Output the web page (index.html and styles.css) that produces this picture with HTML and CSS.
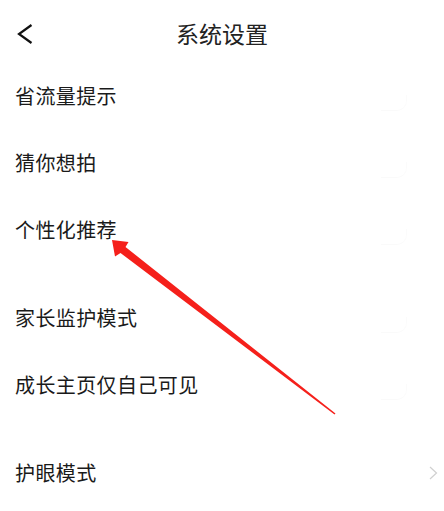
FILE: index.html
```html
<!DOCTYPE html>
<html lang="zh">
<head>
<meta charset="utf-8">
<link rel="stylesheet" href="styles.css">
</head>
<body>
<div class="page">
  <header class="topbar">
    <svg class="back" width="16" height="20" viewBox="0 0 16 20"><polyline points="14.5,1 2,10 14.5,19" fill="none" stroke="#111" stroke-width="2.2" stroke-linejoin="miter"/></svg>
    <h1 class="title">系统设置</h1>
  </header>
  <ul class="list">
    <li class="row"><span class="label">省流量提示</span><span class="toggle"></span></li>
    <li class="row"><span class="label">猜你想拍</span><span class="toggle"></span></li>
    <li class="row"><span class="label">个性化推荐</span><span class="toggle"></span></li>
    <li class="row group-start"><span class="label">家长监护模式</span><span class="toggle"></span></li>
    <li class="row"><span class="label">成长主页仅自己可见</span><span class="toggle"></span></li>
    <li class="row group-start"><span class="label">护眼模式</span>
      <svg class="chev" width="9" height="14" viewBox="0 0 9 14"><polyline points="1,1 7.5,7 1,13" fill="none" stroke="#d0d0d0" stroke-width="1.2"/></svg>
    </li>
  </ul>
  <svg class="arrow" width="444" height="511" viewBox="0 0 444 511">
    <polygon points="112,240 128.5,242 125.5,247 335.5,413.5 334.5,414.5 120.5,253 115,256.5" fill="#f5201b"/>
  </svg>
</div>
</body>
</html>
```
FILE: styles.css
```css
* { box-sizing: border-box; }
html, body { margin: 0; padding: 0; background: #fff; }
body {
  font-family: "Noto Sans CJK SC", "Noto Sans", sans-serif;
  color: #1a1a1a;
}
.page {
  position: relative;
  width: 444px;
  height: 511px;
  overflow: hidden;
}
.topbar {
  position: relative;
  height: 62px;
  padding-top: 6px;
  display: flex;
  align-items: flex-start;
  justify-content: center;
}
.back {
  position: absolute;
  left: 17px;
  top: 24px;
}
.title {
  margin: 16px 0 0;
  font-size: 23px;
  font-weight: 400;
  color: #222;
  line-height: 1;
}
.list {
  list-style: none;
  margin: 0;
  padding: 0;
}
.row {
  height: 67px;
  display: flex;
  align-items: center;
  justify-content: space-between;
  padding: 0 6px 0 15px;
}
.group-start { margin-top: 21px; }
.label {
  font-size: 20px;
  letter-spacing: 0.4px;
  line-height: 1;
}
.toggle {
  width: 26px;
  height: 16px;
  margin-right: 31px;
  margin-top: 14px;
  border-radius: 0 0 10px 0;
  border-bottom: 1px solid rgba(0,0,0,0.02);
  border-right: 1px solid rgba(0,0,0,0.015);
}
.chev { margin-right: 0; }
.arrow {
  position: absolute;
  left: 0;
  top: 0;
  pointer-events: none;
}
```
